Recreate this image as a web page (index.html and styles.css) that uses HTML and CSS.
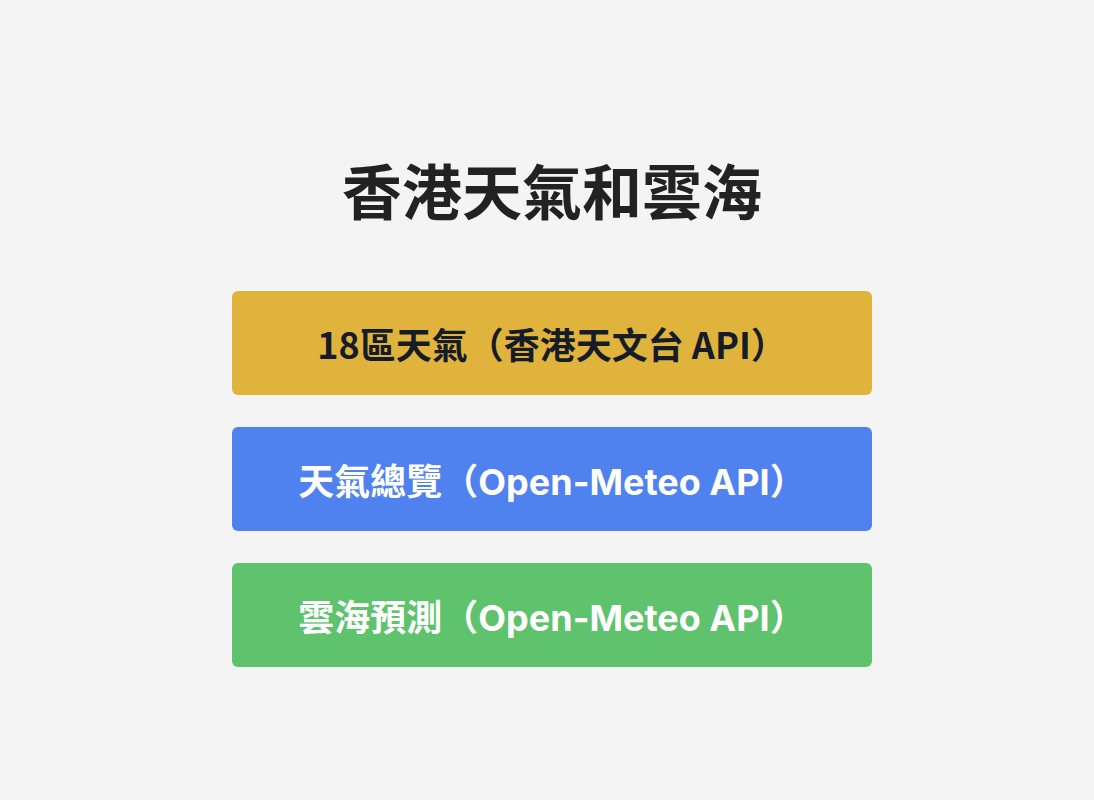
FILE: index.html
```html
<!DOCTYPE html>
<html lang="zh-Hant">
<head>
<meta charset="utf-8">
<title>香港天氣和雲海</title>
<link rel="stylesheet" href="styles.css">
</head>
<body>
<main class="page">
  <h1 class="title">香港天氣和雲海</h1>
  <nav class="menu">
    <a class="btn btn-yellow" href="#">18區天氣（香港天文台 API）</a>
    <a class="btn btn-blue" href="#">天氣總覽（Open-Meteo API）</a>
    <a class="btn btn-green" href="#">雲海預測（Open-Meteo API）</a>
  </nav>
</main>
</body>
</html>
```

FILE: styles.css
```css
html, body {
  margin: 0;
  padding: 0;
  background: #f4f4f4;
}
body {
  font-family: "Noto Sans CJK TC", "Noto Sans", sans-serif;
}
.page {
  display: flex;
  flex-direction: column;
  align-items: center;
  padding-top: 153px;
  padding-left: 10px;
}
.title {
  margin: 0 0 66px;
  font-size: 60px;
  line-height: 72px;
  font-weight: 700;
  color: #222222;
}
.menu {
  display: flex;
  flex-direction: column;
  gap: 32px;
  width: 640px;
}
.btn {
  display: flex;
  align-items: center;
  justify-content: center;
  height: 104px;
  border-radius: 6px;
  font-size: 36px;
  font-weight: 700;
  text-decoration: none;
  color: #ffffff;
  font-family: Inter, "Noto Sans CJK TC", sans-serif;
}
.btn-yellow {
  background: #e0b43c;
  color: #161b28;
  font-family: "Noto Sans CJK TC", sans-serif;
}
.btn-blue {
  background: #4f82ee;
}
.btn-green {
  background: #5ec36c;
}
```
